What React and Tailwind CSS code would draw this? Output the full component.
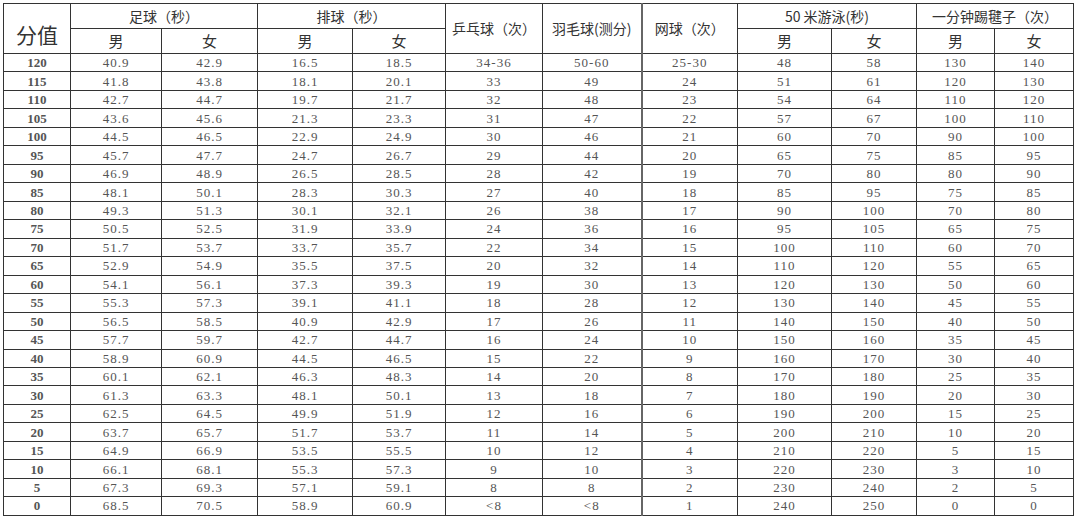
import React from "react";

const scores = [120,115,110,105,100,95,90,85,80,75,70,65,60,55,50,45,40,35,30,25,20,15,10,5,0];
const fbM = ["40.9","41.8","42.7","43.6","44.5","45.7","46.9","48.1","49.3","50.5","51.7","52.9","54.1","55.3","56.5","57.7","58.9","60.1","61.3","62.5","63.7","64.9","66.1","67.3","68.5"];
const fbF = ["42.9","43.8","44.7","45.6","46.5","47.7","48.9","50.1","51.3","52.5","53.7","54.9","56.1","57.3","58.5","59.7","60.9","62.1","63.3","64.5","65.7","66.9","68.1","69.3","70.5"];
const vbM = ["16.5","18.1","19.7","21.3","22.9","24.7","26.5","28.3","30.1","31.9","33.7","35.5","37.3","39.1","40.9","42.7","44.5","46.3","48.1","49.9","51.7","53.5","55.3","57.1","58.9"];
const vbF = ["18.5","20.1","21.7","23.3","24.9","26.7","28.5","30.3","32.1","33.9","35.7","37.5","39.3","41.1","42.9","44.7","46.5","48.3","50.1","51.9","53.7","55.5","57.3","59.1","60.9"];
const pp = ["34-36","33","32","31","30","29","28","27","26","24","22","20","19","18","17","16","15","14","13","12","11","10","9","8","<8"];
const bd = ["50-60","49","48","47","46","44","42","40","38","36","34","32","30","28","26","24","22","20","18","16","14","12","10","8","<8"];
const tn = ["25-30","24","23","22","21","20","19","18","17","16","15","14","13","12","11","10","9","8","7","6","5","4","3","2","1"];
const swM = ["48","51","54","57","60","65","70","85","90","95","100","110","120","130","140","150","160","170","180","190","200","210","220","230","240"];
const swF = ["58","61","64","67","70","75","80","95","100","105","110","120","130","140","150","160","170","180","190","200","210","220","230","240","250"];
const skM = ["130","120","110","100","90","85","80","75","70","65","60","55","50","45","40","35","30","25","20","15","10","5","3","2","0"];
const skF = ["140","130","120","110","100","95","90","85","80","75","70","65","60","55","50","45","40","35","30","25","20","15","10","5","0"];

const sans = "font-['Noto_Sans_CJK_SC','Noto_Sans',sans-serif]";
const serif = "font-['Liberation_Serif','Noto_Sans_CJK_SC',serif]";

export default function App() {
  const th = `border border-[#333] text-[14px] text-[#333] font-normal text-center p-0 ${sans}`;
  const td = `border border-[#333] text-[13px] text-[#555] text-center p-0 leading-none tracking-[1px] ${serif}`;
  return (
    <div className="w-[1080px] h-[521px] bg-white overflow-hidden pt-[3px] pl-[3px]">
      <table className="border-collapse table-fixed w-[1070px]">
        <colgroup>
          <col className="w-[67px]" />
          <col className="w-[91px]" />
          <col className="w-[96px]" />
          <col className="w-[95px]" />
          <col className="w-[93px]" />
          <col className="w-[97px]" />
          <col className="w-[99px]" />
          <col className="w-[96px]" />
          <col className="w-[94px]" />
          <col className="w-[85px]" />
          <col className="w-[78px]" />
          <col className="w-[79px]" />
        </colgroup>
        <thead>
          <tr className="h-[25px]">
            <th rowSpan={2} className={`${th} text-[21px] font-medium text-[#222] pt-[12px] leading-none`}>分值</th>
            <th colSpan={2} className={th}>足球（秒）</th>
            <th colSpan={2} className={th}>排球（秒）</th>
            <th rowSpan={2} className={th}>乒乓球（次）</th>
            <th rowSpan={2} className={th}>羽毛球(测分)</th>
            <th rowSpan={2} className={`${th} border-l-2 border-l-[#666]`}>网球（次）</th>
            <th colSpan={2} className={th}>50 米游泳(秒)</th>
            <th colSpan={2} className={th}>一分钟踢毽子（次）</th>
          </tr>
          <tr className="h-[25px]">
            <th className={`${th} text-[15px]`}>男</th>
            <th className={`${th} text-[15px]`}>女</th>
            <th className={`${th} text-[15px]`}>男</th>
            <th className={`${th} text-[15px]`}>女</th>
            <th className={`${th} text-[15px]`}>男</th>
            <th className={`${th} text-[15px]`}>女</th>
            <th className={`${th} text-[15px]`}>男</th>
            <th className={`${th} text-[15px]`}>女</th>
          </tr>
        </thead>
        <tbody>
          {scores.map((s, i) => (
            <tr key={s} className="h-[18.48px]">
              <td className={`${td} font-bold text-[#111] tracking-normal`}>{s}</td>
              <td className={td}>{fbM[i]}</td>
              <td className={td}>{fbF[i]}</td>
              <td className={td}>{vbM[i]}</td>
              <td className={td}>{vbF[i]}</td>
              <td className={td}>{pp[i]}</td>
              <td className={td}>{bd[i]}</td>
              <td className={`${td} border-l-2 border-l-[#666]`}>{tn[i]}</td>
              <td className={td}>{swM[i]}</td>
              <td className={td}>{swF[i]}</td>
              <td className={td}>{skM[i]}</td>
              <td className={td}>{skF[i]}</td>
            </tr>
          ))}
        </tbody>
      </table>
    </div>
  );
}
